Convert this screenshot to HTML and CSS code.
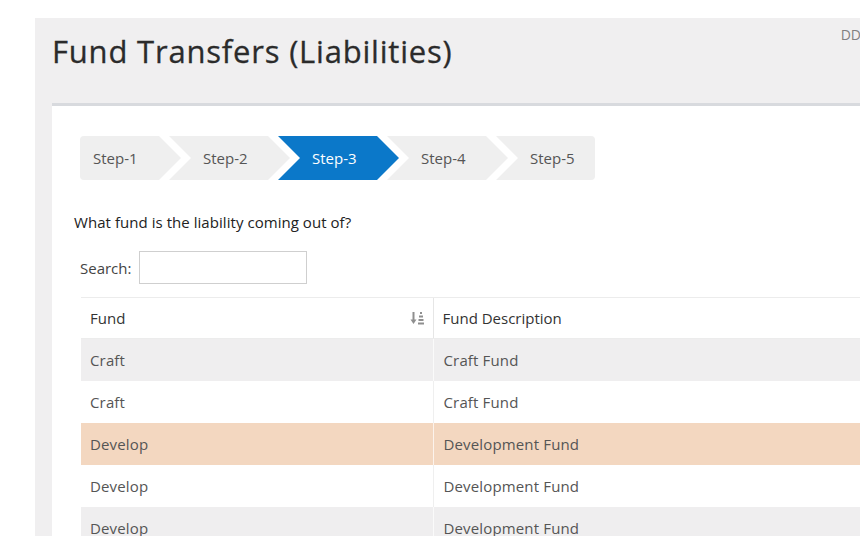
FILE: index.html
```html
<!DOCTYPE html>
<html lang="en">
<head>
<meta charset="utf-8">
<title>Fund Transfers (Liabilities)</title>
<link rel="stylesheet" href="styles.css">
</head>
<body>
<div class="panel">
  <div class="panel-head">
    <h1 class="title">Fund Transfers (Liabilities)</h1>
    <span class="user">DD</span>
  </div>
  <div class="card">
    <div class="steps">
      <div class="step step-first">Step-1</div>
      <div class="step step-mid">Step-2</div>
      <div class="step step-mid step-active">Step-3</div>
      <div class="step step-mid">Step-4</div>
      <div class="step step-last">Step-5</div>
    </div>
    <p class="question">What fund is the liability coming out of?</p>
    <div class="search">
      <label class="search-label" for="q">Search:</label>
      <input class="search-input" id="q" type="text">
    </div>
    <table class="grid">
      <thead>
        <tr>
          <th class="col-fund">
            <span class="th-inner">Fund
              <svg class="sort-icon" width="15" height="14" viewBox="0 0 15 14" aria-hidden="true">
                <path d="M3.5 1v9" stroke="#8f8f8f" stroke-width="2" fill="none"/>
                <path d="M0.5 8.5h6L3.5 13z" fill="#8f8f8f"/>
                <rect x="10" y="1" width="2" height="2" fill="#8f8f8f"/>
                <rect x="9" y="4.5" width="4" height="2" fill="#8f8f8f"/>
                <rect x="8.5" y="8" width="5" height="2" fill="#8f8f8f"/>
                <rect x="8" y="11.5" width="6" height="2" fill="#8f8f8f"/>
              </svg>
            </span>
          </th>
          <th class="col-desc">Fund Description</th>
        </tr>
      </thead>
      <tbody>
        <tr class="row-odd"><td>Craft</td><td class="cell-desc">Craft Fund</td></tr>
        <tr class="row-even"><td>Craft</td><td class="cell-desc">Craft Fund</td></tr>
        <tr class="row-selected"><td>Develop</td><td class="cell-desc">Development Fund</td></tr>
        <tr class="row-even"><td>Develop</td><td class="cell-desc">Development Fund</td></tr>
        <tr class="row-odd"><td>Develop</td><td class="cell-desc">Development Fund</td></tr>
      </tbody>
    </table>
  </div>
</div>
</body>
</html>
```

FILE: styles.css
```css
html, body {
  margin: 0;
  padding: 0;
  background: #ffffff;
  overflow: hidden;
  height: 536px;
}

body {
  font-family: "Open Sans", "Liberation Sans", sans-serif;
  color: #333;
}

.panel {
  margin: 18px 0 0 35px;
  width: 830px;
  background: #f0eff0;
  min-height: 600px;
}

.panel-head {
  display: flex;
  align-items: flex-start;
  padding: 13px 4px 31px 17px;
}

.title {
  margin: 0;
  font-size: 31px;
  font-weight: 400;
  line-height: 41px;
  color: #2b2b2b;
  letter-spacing: 0.8px;
  -webkit-text-stroke: 0.3px #2b2b2b;
}

.user {
  margin-left: auto;
  margin-top: -6px;
  font-size: 14px;
  line-height: 19px;
  color: #808080;
}

.card {
  margin-left: 17px;
  background: #ffffff;
  border-top: 3px solid #d8dade;
  padding: 30px 0 0 22px;
  min-height: 500px;
}

.steps {
  display: flex;
  margin-left: 6px;
  height: 44px;
}

.step {
  height: 44px;
  line-height: 44px;
  font-size: 15px;
  color: #555;
  background: #efefef;
  box-sizing: border-box;
  flex: none;
}

.step-first {
  width: 101px;
  padding-left: 13px;
  border-radius: 4px 0 0 4px;
  clip-path: polygon(0 0, calc(100% - 22px) 0, 100% 50%, calc(100% - 22px) 100%, 0 100%);
}

.step-mid {
  width: 121px;
  margin-left: -12px;
  padding-left: 34px;
  clip-path: polygon(0 0, calc(100% - 22px) 0, 100% 50%, calc(100% - 22px) 100%, 0 100%, 22px 50%);
}

.step-last {
  width: 99px;
  margin-left: -12px;
  padding-left: 34px;
  border-radius: 0 4px 4px 0;
  clip-path: polygon(0 0, 100% 0, 100% 100%, 0 100%, 22px 50%);
}

.step-active {
  background: #0b78c9;
  color: #ffffff;
}

.question {
  margin: 32px 0 0 0;
  font-size: 15px;
  line-height: 20px;
  color: #222;
  letter-spacing: 0.05px;
}

.search {
  display: flex;
  align-items: center;
  margin: 19px 0 0 6px;
}

.search-label {
  font-size: 15px;
  color: #444;
  width: 59px;
}

.search-input {
  width: 168px;
  height: 33px;
  box-sizing: border-box;
  border: 1px solid #cfcfcf;
  background: #fff;
  margin: 0;
  padding: 0 6px;
}

.grid {
  margin: 13px 0 0 7px;
  width: 800px;
  border-collapse: collapse;
  font-size: 15px;
}

.grid th {
  height: 41px;
  box-sizing: border-box;
  text-align: left;
  font-weight: 400;
  color: #333;
  padding: 0 0 0 9px;
  border-top: 1px solid #ececec;
  border-bottom: 1px solid #ececec;
}

.col-fund {
  width: 352px;
}

.th-inner {
  display: flex;
  align-items: center;
  justify-content: space-between;
  padding-right: 8px;
}

.sort-icon {
  display: block;
}

.grid th.col-desc {
  border-left: 1px solid #e6e6e6;
  padding-left: 9px;
}

.grid td {
  height: 42px;
  box-sizing: border-box;
  padding: 0 0 0 9px;
  color: #555;
  letter-spacing: 0.15px;
}

.grid td.cell-desc {
  border-left: 1px solid rgba(255, 255, 255, 0.7);
  padding-left: 10px;
}

.row-odd td {
  background: #efeeef;
}

.row-even td {
  background: #ffffff;
}

.row-even td.cell-desc {
  border-left-color: #efefef;
}

.row-selected td {
  background: #f3d7c0;
}
```
